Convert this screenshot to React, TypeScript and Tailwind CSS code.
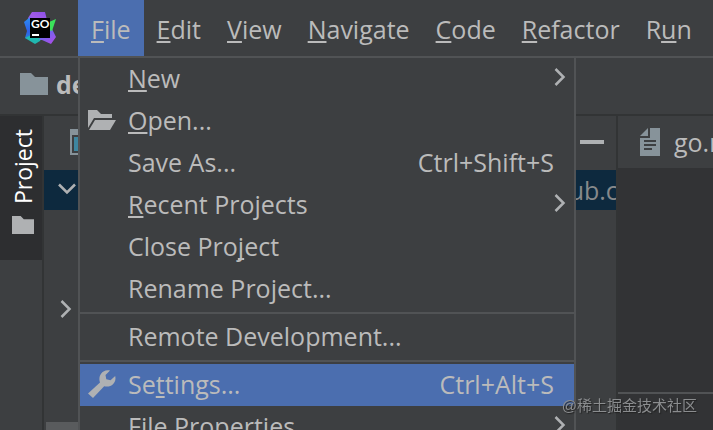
import React from 'react';
import clsx from 'clsx';

interface MenuBarItem {
  label: string;
  mnemonic: number;
  active?: boolean;
}

interface MenuEntry {
  label: string;
  mnemonic?: number;
  shortcut?: string;
  submenu?: boolean;
  active?: boolean;
  icon?: React.ReactNode;
}

function Mnemonic({ label, index }: { label: string; index?: number }) {
  if (index === undefined) return <span>{label}</span>;

  return (
    <span>
      {label.slice(0, index)}
      <span className="underline decoration-2 underline-offset-2 [text-decoration-skip-ink:none]">
        {label[index]}
      </span>
      {label.slice(index + 1)}
    </span>
  );
}

function GoLandLogo() {
  return (
    <svg className="h-8 w-8" viewBox="0 0 32 32" aria-label="GoLand">
      <defs>
        <linearGradient id="top" x1="0" y1="1" x2="1" y2="0">
          <stop offset="0" stopColor="#4a6cf0" />
          <stop offset="0.5" stopColor="#a25be6" />
          <stop offset="1" stopColor="#8a50e8" />
        </linearGradient>
        <linearGradient id="left" x1="0" y1="0" x2="0" y2="1">
          <stop offset="0" stopColor="#2b8cf0" />
          <stop offset="0.6" stopColor="#2f5fe8" />
          <stop offset="1" stopColor="#2a86d8" />
        </linearGradient>
        <linearGradient id="right" x1="0" y1="0" x2="0.6" y2="1">
          <stop offset="0" stopColor="#3d7cf0" />
          <stop offset="1" stopColor="#a450ea" />
        </linearGradient>
      </defs>
      <path d="M8 0h13l2 8-8 6-12-1 1-7z" fill="url(#top)" />
      <path d="M0 10l5-4 5 6v16l-9-2 2-7z" fill="url(#left)" />
      <path d="M1 26l6-3 11 2-2 4-5 3z" fill="#20b8b0" />
      <path d="M15 28l9-14 4 3 4 8-5 7-9-4z" fill="url(#right)" />
      <path d="M25 10l7-3-4 12-3-1z" fill="#3be35a" />
      <rect x="6" y="6" width="20" height="20" fill="#000" />
      <text
        x="7"
        y="16"
        fill="#fff"
        className="font-['Lato','Open_Sans',sans-serif] text-[12px] font-bold"
      >
        GO
      </text>
      <path d="M8 22h7v2H8z" fill="#fff" />
    </svg>
  );
}

function FolderIcon({ className }: { className?: string }) {
  return (
    <svg className={className} viewBox="0 0 28 22" fill="currentColor" preserveAspectRatio="none">
      <path d="M0 0h11l4 4h13v18H0z" />
    </svg>
  );
}

function OpenFolderIcon() {
  return (
    <svg className="h-5 w-7" viewBox="0 0 28 20" fill="currentColor">
      <path d="M0 0h9l4 4h11v4H6L0 18z" />
      <path d="M7 10h21l-6 10H1z" />
    </svg>
  );
}

function WrenchIcon() {
  return (
    <svg className="h-7 w-7" viewBox="0 0 28 28" fill="currentColor">
      <path d="M0 23.500L12 12.500C10.500 8 12 3.500 15.500 1.500 17.500 .3 20 0 22 .6L17.500 5l.8 4.200 4.200 1L27.200 6c.8 3 0 6-2 8-2.500 2.500-5.700 3-9 2.200L5 28z" />
    </svg>
  );
}

function Chevron({ className }: { className?: string }) {
  return (
    <svg
      className={clsx('h-5 w-3', className)}
      viewBox="0 0 12 20"
      fill="none"
      stroke="currentColor"
      strokeWidth="2.500"
    >
      <path d="M1.500 2l8 8-8 8" />
    </svg>
  );
}

function FileIcon() {
  return (
    <svg className="h-7 w-5 shrink-0" viewBox="0 0 20 28" fill="currentColor">
      <path d="M8 0v8H0z" />
      <path
        fillRule="evenodd"
        d="M10 0h10v28H0V10h10zM4 12v2h12v-2zM4 16v2h12v-2zM4 20v2h8v-2z"
      />
    </svg>
  );
}

function ProjectViewIcon() {
  return (
    <svg className="h-[26px] w-8" viewBox="0 0 32 26">
      <path d="M0 0h32v26H0z" fill="#87939a" />
      <path d="M2 6h28v18H2z" fill="#3d3f41" />
      <path d="M4 8h12v14H4z" fill="#3e86a0" />
    </svg>
  );
}

const menuBar: MenuBarItem[] = [
  { label: 'File', mnemonic: 0, active: true },
  { label: 'Edit', mnemonic: 0 },
  { label: 'View', mnemonic: 0 },
  { label: 'Navigate', mnemonic: 0 },
  { label: 'Code', mnemonic: 0 },
  { label: 'Refactor', mnemonic: 0 },
  { label: 'Run', mnemonic: 1 },
];

const fileMenu: MenuEntry[][] = [
  [
    { label: 'New', mnemonic: 0, submenu: true },
    { label: 'Open...', mnemonic: 0, icon: <OpenFolderIcon /> },
    { label: 'Save As...', shortcut: 'Ctrl+Shift+S' },
    { label: 'Recent Projects', mnemonic: 0, submenu: true },
    { label: 'Close Project', mnemonic: 9 },
    { label: 'Rename Project...' },
  ],
  [{ label: 'Remote Development...' }],
  [
    {
      label: 'Settings...',
      mnemonic: 2,
      shortcut: 'Ctrl+Alt+S',
      active: true,
      icon: <WrenchIcon />,
    },
    { label: 'File Properties', submenu: true },
  ],
];

function FileMenu() {
  return (
    <div
      role="menu"
      className="absolute left-0 top-full z-10 w-[498px] border-x-2 border-[#515355] bg-[#3d3f41]"
    >
      {fileMenu.map((group, index) => (
        <div
          key={index}
          className={clsx(index > 0 && 'mt-0.5 border-t-2 border-[#515355] pt-0.5')}
        >
          {group.map((entry) => (
            <button
              key={entry.label}
              type="button"
              role="menuitem"
              className={clsx(
                'flex h-[42px] w-full items-center pb-0.5 pl-2 text-left',
                entry.active && 'bg-[#4b6eaf]'
              )}
            >
              <span className="flex w-10 shrink-0 text-[#afb1b3]">{entry.icon}</span>
              <Mnemonic label={entry.label} index={entry.mnemonic} />
              {entry.shortcut && <span className="ml-auto pr-5">{entry.shortcut}</span>}
              {entry.submenu && <Chevron className="mb-0.5 ml-auto mr-2 text-[#afb1b3]" />}
            </button>
          ))}
        </div>
      ))}
    </div>
  );
}

function MenuBar() {
  return (
    <header className="flex h-[58px] shrink-0 border-b-2 border-[#515355]">
      <div className="flex w-[78px] shrink-0 items-center pl-6">
        <GoLandLogo />
      </div>
      <nav className="flex">
        {menuBar.map((item) => (
          <div key={item.label} className="relative flex">
            <button
              type="button"
              className={clsx(
                'whitespace-nowrap px-[13px] pt-0.5',
                item.active && 'bg-[#4b6eaf]'
              )}
            >
              <Mnemonic label={item.label} index={item.mnemonic} />
            </button>
            {item.active && (
              <div className="absolute left-0 top-full mt-0.5">
                <FileMenu />
              </div>
            )}
          </div>
        ))}
      </nav>
    </header>
  );
}

function ProjectPanel() {
  return (
    <section className="flex w-[574px] shrink-0 flex-col border-r-2 border-[#323435]">
      <div className="flex h-[52px] shrink-0 items-center justify-between pl-[26px] pr-3">
        <ProjectViewIcon />
        <button type="button" aria-label="Hide" className="h-1 w-6 bg-[#afb1b3]" />
      </div>
      <div className="mt-0.5 flex h-10 shrink-0 items-center justify-between overflow-hidden bg-[#0d293e] pl-4">
        <Chevron className="mb-0.5 ml-px rotate-90 text-[#afb1b3]" />
        <span className="-mr-10 text-[#87898b]">github.com</span>
      </div>
      <div className="flex h-[198px] shrink-0 items-center pl-4">
        <Chevron className="text-[#afb1b3]" />
      </div>
      <div className="ml-0.5 mr-12 mt-auto h-2 bg-[#595b5d]" />
    </section>
  );
}

export default function App() {
  return (
    <div className="flex h-screen flex-col overflow-hidden bg-[#3d3f41] font-['Open_Sans','Noto_Sans',sans-serif] text-[25px] leading-8 text-[#bbbbbb]">
      <MenuBar />

      <div className="flex h-[58px] shrink-0 items-center gap-2 border-b-2 border-[#323435] pb-1 pl-5">
        <FolderIcon className="h-[22px] w-7 text-[#87939a]" />
        <span className="font-bold">demo</span>
      </div>

      <main className="flex min-h-0 flex-1">
        <aside className="w-11 shrink-0 border-r-2 border-[#323435]">
          <button
            type="button"
            className="flex h-36 w-full flex-col items-center justify-end gap-3 bg-[#2d2e30] pb-[26px] pl-1 text-white"
          >
            <span className="rotate-180 text-[23px] [writing-mode:vertical-rl]">Project</span>
            <FolderIcon className="h-[18px] w-[22px] text-[#afb1b3]" />
          </button>
        </aside>

        <ProjectPanel />

        <section className="flex min-w-0 flex-1 flex-col">
          <div className="flex h-[52px] shrink-0 items-center gap-3.5 overflow-hidden pl-[22px] text-[#87939a]">
            <FileIcon />
            <span className="text-[#bbbbbb]">go.mod</span>
          </div>
          <div className="flex flex-1 flex-col bg-[#323335]">
            <div className="mb-9 mt-auto h-0.5 bg-[#515355]" />
          </div>
        </section>
      </main>

      <div className="fixed bottom-3 right-4 z-20 font-['Liberation_Sans','Noto_Sans_CJK_SC',sans-serif] text-[15px] leading-6 text-[#8b8d8f] [text-shadow:1px_1px_1px_#222]">
        @稀土掘金技术社区
      </div>
    </div>
  );
}
